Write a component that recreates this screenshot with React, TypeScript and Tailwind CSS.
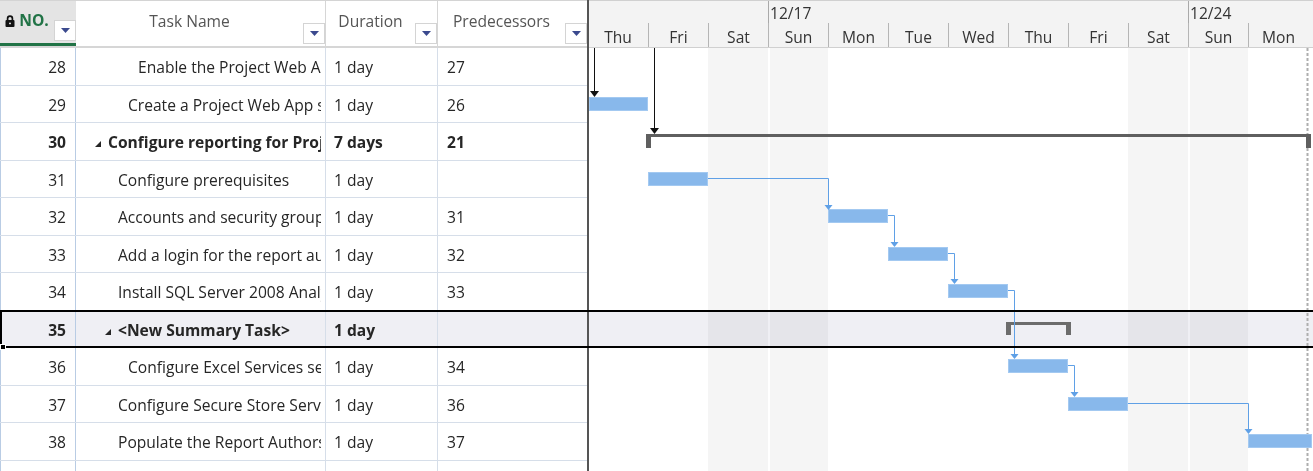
import React from 'react'

type Row = {
  no: number
  name: string
  dur: string
  pred: string
  pad: string
  h: string
  summary?: boolean
  selected?: boolean
}

const rows: Row[] = [
  { no: 28, name: 'Enable the Project Web App instance', dur: '1 day', pred: '27', pad: 'pl-[62px]', h: 'h-[38px]' },
  { no: 29, name: 'Create a Project Web App site', dur: '1 day', pred: '26', pad: 'pl-[52px]', h: 'h-[37px]' },
  { no: 30, name: 'Configure reporting for Project Web App', dur: '7 days', pred: '21', pad: 'pl-[19px]', h: 'h-[38px]', summary: true },
  { no: 31, name: 'Configure prerequisites', dur: '1 day', pred: '', pad: 'pl-[42px]', h: 'h-[37px]' },
  { no: 32, name: 'Accounts and security groups', dur: '1 day', pred: '31', pad: 'pl-[42px]', h: 'h-[38px]' },
  { no: 33, name: 'Add a login for the report author', dur: '1 day', pred: '32', pad: 'pl-[42px]', h: 'h-[37px]' },
  { no: 34, name: 'Install SQL Server 2008 Analysis Management Objects', dur: '1 day', pred: '33', pad: 'pl-[42px]', h: 'h-[38px]' },
  { no: 35, name: '<New Summary Task>', dur: '1 day', pred: '', pad: 'pl-[29px]', h: 'h-[37px]', summary: true, selected: true },
  { no: 36, name: 'Configure Excel Services settings', dur: '1 day', pred: '34', pad: 'pl-[52px]', h: 'h-[38px]' },
  { no: 37, name: 'Configure Secure Store Service', dur: '1 day', pred: '36', pad: 'pl-[42px]', h: 'h-[37px]' },
  { no: 38, name: 'Populate the Report Authors group', dur: '1 day', pred: '37', pad: 'pl-[42px]', h: 'h-[38px]' },
]

const days = ['Thu', 'Fri', 'Sat', 'Sun', 'Mon', 'Tue', 'Wed', 'Thu', 'Fri', 'Sat', 'Sun', 'Mon']

// task bars, page coordinates
const bars = [
  { x: 589, y: 97, w: 59 },
  { x: 648, y: 172, w: 60 },
  { x: 828, y: 209, w: 60 },
  { x: 888, y: 247, w: 60 },
  { x: 948, y: 284, w: 60 },
  { x: 1008, y: 359, w: 60 },
  { x: 1068, y: 397, w: 60 },
  { x: 1248, y: 434, w: 64 },
]

const links = [
  { d: 'M708 178.5H828.5V205', x: 828.5, y: 210 },
  { d: 'M888 215.5H894.5V242', x: 894.5, y: 247 },
  { d: 'M948 253.5H954.5V279', x: 954.5, y: 284 },
  { d: 'M1008 290.5H1014.5V354', x: 1014.5, y: 359 },
  { d: 'M1068 365.5H1074.5V392', x: 1074.5, y: 397 },
  { d: 'M1128 403.5H1248.5V429', x: 1248.5, y: 434 },
]

function DropBtn() {
  return (
    <div className="self-end mb-[2px] w-[22px] h-[21px] border border-[#d4d4d4] bg-white flex items-center justify-center shrink-0">
      <svg width="9" height="5" viewBox="0 0 9 5">
        <polygon points="0,0 9,0 4.5,5" fill="#3b4a8e" />
      </svg>
    </div>
  )
}

function Lock() {
  return (
    <svg width="10" height="12" viewBox="0 0 10 12" className="mr-[4px]">
      <path d="M2.6 5.5V3.6a2.4 2.4 0 0 1 4.8 0v1.9" stroke="#111" strokeWidth="1.7" fill="none" />
      <rect x="0.5" y="5" width="9" height="7" rx="1" fill="#111" />
      <circle cx="5" cy="8.4" r="0.9" fill="#fff" />
    </svg>
  )
}

function Caret() {
  return (
    <svg width="6" height="6" viewBox="0 0 6 6" className="shrink-0 mr-[7px] mt-[3px]">
      <polygon points="6,0 6,6 0,6" fill="#262626" />
    </svg>
  )
}

export default function App() {
  return (
    <div className="relative w-[1313px] h-[471px] overflow-hidden bg-white flex font-['Segoe_UI','Open_Sans',sans-serif] text-[15.6px] text-[#262626]">
      {/* grid pane */}
      <div className="w-[587px] flex flex-col shrink-0">
        <div className="h-[48px] flex border-t border-[#d4d4d4] shrink-0">
          <div className="w-[76px] flex flex-col">
            <div className="flex-1 flex bg-[#e4e4e4] border-b-[3px] border-[#217346]">
              <div className="flex-1 h-[40px] flex items-center justify-center">
                <Lock />
                <span className="font-bold text-[#217346]">NO.</span>
              </div>
              <DropBtn />
            </div>
            <div className="h-[2px] bg-[#d6d6d6]" />
          </div>
          <div className="w-[250px] flex border-r border-b-2 border-[#d6d6d6]">
            <div className="flex-1 h-[41px] flex items-center justify-center text-[#555]">Task Name</div>
            <DropBtn />
          </div>
          <div className="w-[112px] flex border-r border-b-2 border-[#d6d6d6]">
            <div className="flex-1 h-[41px] flex items-center justify-center text-[#555]">Duration</div>
            <DropBtn />
          </div>
          <div className="w-[149px] flex border-b-2 border-[#d6d6d6]">
            <div className="flex-1 h-[41px] flex items-center justify-center text-[#555]">Predecessors</div>
            <DropBtn />
          </div>
        </div>

        {rows.map((r) => (
          <div
            key={r.no}
            className={`${r.h} shrink-0 flex pt-[3px] border-b border-[#d6dee9] ${r.selected ? 'bg-[#efeff4]' : ''} ${r.summary ? 'font-bold' : ''}`}
          >
            <div className="w-[76px] -mt-[3px] pt-[3px] border-l border-r border-[#b9cce4] flex items-center justify-end pr-[9px]">
              {r.no}
            </div>
            <div className={`w-[250px] -mt-[3px] pt-[3px] border-r border-[#d6dee9] flex items-center ${r.pad}`}>
              <div className="flex items-center mr-[4px] overflow-hidden whitespace-nowrap">
                {r.summary && <Caret />}
                <span>{r.name}</span>
              </div>
            </div>
            <div className="w-[112px] -mt-[3px] pt-[3px] border-r border-[#d6dee9] flex items-center pl-[8px]">{r.dur}</div>
            <div className={`w-[149px] flex items-center pl-[9px] ${r.no === 30 ? 'font-bold' : 'font-normal'}`}>{r.pred}</div>
          </div>
        ))}
        <div className="flex-1 flex">
          <div className="w-[76px] border-l border-r border-[#b9cce4]" />
          <div className="w-[250px] border-r border-[#d6dee9]" />
          <div className="w-[112px] border-r border-[#d6dee9]" />
        </div>
      </div>

      <div className="w-[2px] shrink-0 bg-[#555]" />

      {/* gantt pane */}
      <div className="flex-1 flex flex-col min-w-0">
        <div className="h-[48px] shrink-0 bg-[#f3f3f3] border-t border-b border-[#d0d0d0] overflow-hidden">
          <div className="-ml-px flex flex-col h-full">
            <div className="h-[22px] flex text-[#333]">
              <div className="w-[180px] shrink-0" />
              <div className="w-[420px] shrink-0 border-l border-[#a9a9a9] pl-[1px] leading-[24px]">12/17</div>
              <div className="w-[420px] shrink-0 border-l border-[#a9a9a9] pl-[1px] leading-[24px]">12/24</div>
            </div>
            <div className="flex-1 flex text-[#333]">
              {days.map((d, i) => (
                <div
                  key={i}
                  className={`w-[60px] shrink-0 flex items-end justify-center ${i > 0 ? 'border-l border-[#b5b5b5]' : ''}`}
                >
                  <span className="translate-y-[2px]">{d}</span>
                </div>
              ))}
            </div>
          </div>
        </div>

        <div className="relative flex-1 overflow-hidden">
          <div className="absolute inset-0 -left-px flex">
            {days.map((d, i) => (
              <div
                key={i}
                className={`w-[60px] shrink-0 ${d === 'Sat' ? 'bg-[#f5f5f5]' : ''} ${d === 'Sun' ? 'bg-[#f5f5f5] border-l-2 border-white' : ''}`}
              />
            ))}
          </div>
          <div className="relative flex flex-col">
            {rows.map((r) => (
              <div key={r.no} className={`${r.h} ${r.selected ? 'bg-[#efeff4] mix-blend-multiply' : ''}`} />
            ))}
          </div>
          <svg className="absolute inset-0" width="724" height="423" viewBox="589 48 724 423">
            <line x1="1307.5" y1="48" x2="1307.5" y2="471" stroke="#aeaeae" strokeWidth="2" strokeDasharray="3 2" />

            {/* summary bars */}
            <g fill="#5f5f5f">
              <rect x="648" y="134" width="663" height="3" />
              <rect x="646" y="134" width="5" height="14" />
              <rect x="1306" y="134" width="5" height="14" />
            </g>
            <g fill="#6c6c6c">
              <rect x="1006" y="322" width="65" height="3" />
              <rect x="1006" y="322" width="5" height="13" />
              <rect x="1066" y="322" width="5" height="13" />
            </g>

            {bars.map((b, i) => (
              <rect key={i} x={b.x + 0.5} y={b.y + 0.5} width={b.w - 1} height="13" fill="#88b8eb" stroke="#a3c9f1" />
            ))}

            <g stroke="#111" strokeWidth="1">
              <line x1="594.5" y1="48" x2="594.5" y2="92" />
              <line x1="654.5" y1="48" x2="654.5" y2="129" />
            </g>
            <g fill="#111">
              <polygon points="590,91 599,91 594.5,97" />
              <polygon points="650,128 659,128 654.5,134" />
            </g>

            {links.map((l, i) => (
              <g key={i}>
                <path d={l.d} stroke="#5fa0e6" strokeWidth="1" fill="none" />
                <polygon points={`${l.x - 4},${l.y - 5} ${l.x + 4},${l.y - 5} ${l.x},${l.y}`} fill="#5fa0e6" />
              </g>
            ))}
          </svg>
        </div>
      </div>

      {/* selected row outline */}
      <div className="absolute left-0 right-0 top-[310px] h-[38px] border-t-2 border-b-2 border-l-2 border-black pointer-events-none" />
      <div className="absolute left-0 top-[344px] w-[6px] h-[6px] bg-black border border-white" />
    </div>
  )
}
